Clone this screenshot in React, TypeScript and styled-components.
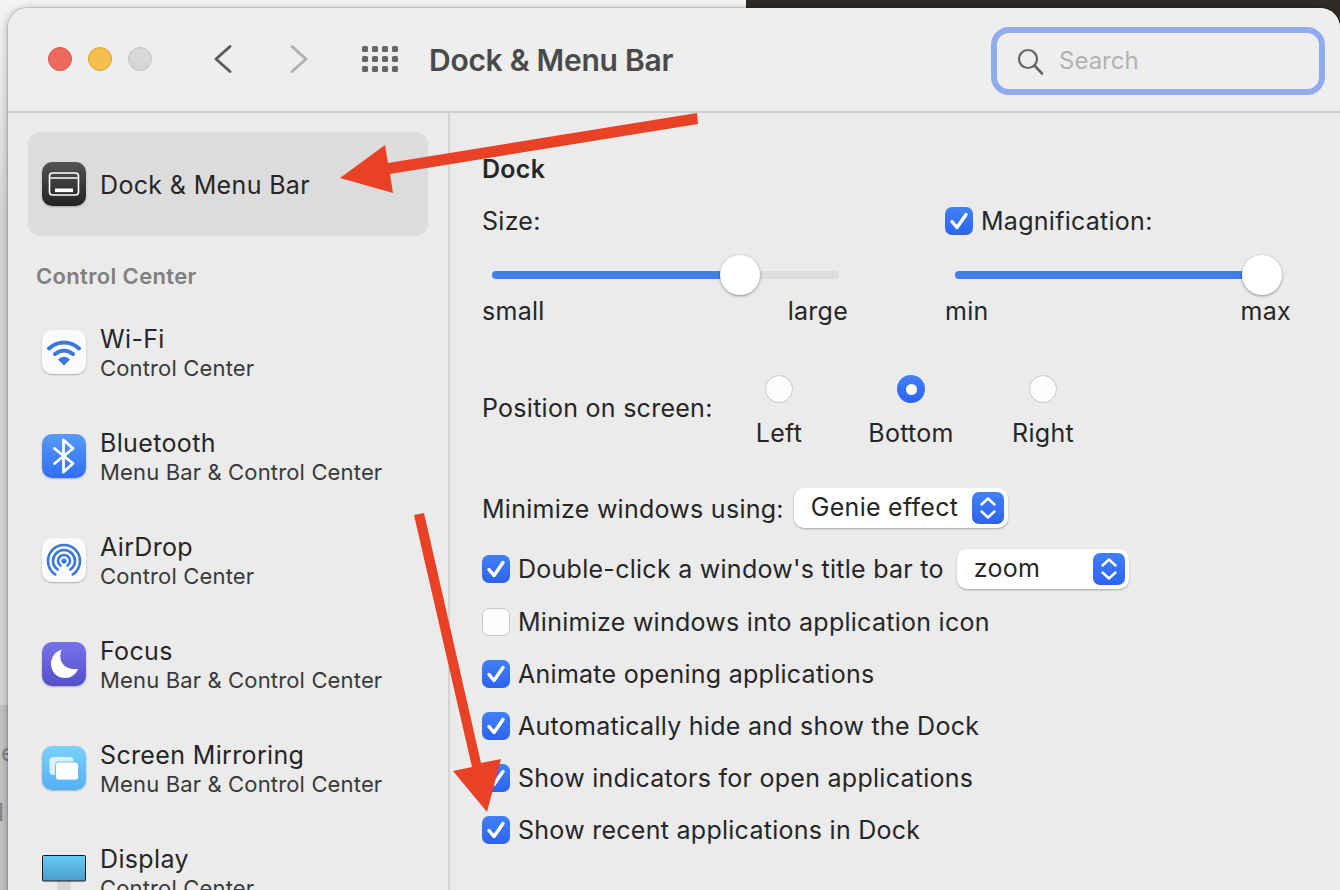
import React from 'react';
import styled, { createGlobalStyle } from 'styled-components';

const GlobalStyle = createGlobalStyle`
  html, body { margin: 0; padding: 0; }
  body {
    font-family: Inter, "Liberation Sans", sans-serif;
    color: #262626;
    -webkit-font-smoothing: antialiased;
  }
`;

const settings = [
  { label: 'Minimize windows into application icon', on: false },
  { label: 'Animate opening applications', on: true },
  { label: 'Automatically hide and show the Dock', on: true },
  { label: 'Show indicators for open applications', on: true },
  { label: 'Show recent applications in Dock', on: true },
];

const WifiIcon = () => (
  <svg width="44" height="44" viewBox="0 0 44 44">
    <g fill="none" stroke="#3a78dc" strokeWidth="4" strokeLinecap="round">
      <path d="M7 18.5C16 10.5 28 10.5 37 18.5" />
      <path d="M13 24C18.5 19.5 25.5 19.5 31 24" />
    </g>
    <path d="M17 29.5C20 27 24 27 27 29.5L22 34.5Z" fill="#3a78dc" stroke="#3a78dc" strokeWidth="1.5" strokeLinejoin="round" />
  </svg>
);

const BluetoothIcon = () => (
  <svg width="44" height="44" viewBox="0 0 44 44">
    <path d="M12.5 14.500L31 29.500L21.500 38V6L31 14.500L12.500 29.500" fill="none" stroke="#fff" strokeWidth="2.800" strokeLinecap="round" strokeLinejoin="round" />
  </svg>
);

const AirDropIcon = () => (
  <svg width="44" height="44" viewBox="0 0 44 44">
    <g fill="none" stroke="#3a78dc" strokeWidth="2.6" strokeLinecap="round">
      <path d="M13.2 36.5C8.6 33.4 6 28.5 6 23A16 16 0 0 1 38 23C38 28.5 35.4 33.4 30.8 36.5" />
      <path d="M15.6 31.5C12.8 29.4 11 26.4 11 23A11 11 0 0 1 33 23C33 26.4 31.2 29.4 28.4 31.5" />
      <path d="M18.5 27.5C17 26.4 16 24.800 16 23A6 6 0 0 1 28 23C28 24.800 27 26.400 25.500 27.500" />
    </g>
    <circle cx="22" cy="23" r="2.600" fill="#3a78dc" />
  </svg>
);

const MoonIcon = () => (
  <svg width="44" height="44" viewBox="0 0 44 44">
    <path d="M19.500 7.500C15.500 19 22 28.500 36 27C33.500 33 28.500 36 23 36C15 36 9 30 9 22C9 15 13.500 9.500 19.500 7.500Z" fill="#fff" />
  </svg>
);

const MirrorIcon = () => (
  <svg width="44" height="44" viewBox="0 0 44 44">
    <rect x="7.500" y="11" width="24" height="18" rx="3.500" fill="#fff" fillOpacity="0.75" />
    <rect x="13.500" y="16" width="23" height="18" rx="3" fill="#fff" stroke="#6cc0f5" strokeWidth="1" />
  </svg>
);

const DisplayIcon = () => (
  <svg width="44" height="44" viewBox="0 0 44 44">
    <defs>
      <linearGradient id="screen" x1="0" y1="0" x2="0" y2="1">
        <stop offset="0" stopColor="#69cbf7" />
        <stop offset="1" stopColor="#479dcb" />
      </linearGradient>
    </defs>
    <rect x="15.500" y="31" width="13" height="13" fill="#d6d6d6" />
    <rect x="0.500" y="5.500" width="43" height="25.500" rx="1" fill="url(#screen)" stroke="#1c1c1c" />
  </svg>
);

const DockGlyph = () => (
  <svg width="44" height="44" viewBox="0 0 44 44">
    <rect x="7.500" y="11" width="29" height="22" rx="3" fill="none" stroke="#fff" strokeWidth="1.600" />
    <path d="M7.500 16H36.500" stroke="#fff" strokeWidth="1.600" />
    <rect x="13" y="26.500" width="18" height="3.600" fill="#fff" />
  </svg>
);

const CheckGlyph = () => (
  <svg width="28" height="28" viewBox="0 0 28 28">
    <path d="M7 14.500L12 20.500L21 7.500" fill="none" stroke="#fff" strokeWidth="3.400" strokeLinecap="round" strokeLinejoin="round" />
  </svg>
);

const StepperGlyph = () => (
  <svg width="32" height="32" viewBox="0 0 32 32">
    <g fill="none" stroke="#fff" strokeWidth="2.400" strokeLinecap="round" strokeLinejoin="round">
      <path d="M9.500 12.500L16 6.500L22.500 12.500" />
      <path d="M9.500 19.500L16 25.500L22.500 19.500" />
    </g>
  </svg>
);

const Check = ({ on = true }: { on?: boolean }) => (
  <CheckBox $on={on}>{on && <CheckGlyph />}</CheckBox>
);

const App = () => {
  return (
    <Page>
      <GlobalStyle />
      <BehindText $top={738} $right={1325}>ne</BehindText>
      <BehindText $top={798} $right={1336}>d</BehindText>
      <Window>
        <TitleBar>
          <Lights>
            <Light $bg="#ec6a5e" $edge="#d3564b" />
            <Light $bg="#f5bf4f" $edge="#d9a437" />
            <Light $bg="#d8d8d8" $edge="#c2c2c2" />
          </Lights>
          <NavIcon $left={61}>
            <svg width="20" height="30" viewBox="0 0 20 30">
              <path d="M17 2.500L3 15L17 27.500" fill="none" stroke="#5c5c5c" strokeWidth="3" strokeLinecap="round" strokeLinejoin="round" />
            </svg>
          </NavIcon>
          <NavIcon $left={56}>
            <svg width="20" height="30" viewBox="0 0 20 30">
              <path d="M3 2.500L17 15L3 27.500" fill="none" stroke="#b0b0b0" strokeWidth="3" strokeLinecap="round" strokeLinejoin="round" />
            </svg>
          </NavIcon>
          <GridIcon>
            {Array.from({ length: 12 }).map((_, i) => (
              <GridDot key={i} />
            ))}
          </GridIcon>
          <Title>Dock &amp; Menu Bar</Title>
          <SearchBox>
            <svg width="28" height="28" viewBox="0 0 28 28">
              <circle cx="12" cy="12" r="9" fill="none" stroke="#666" strokeWidth="2.200" />
              <path d="M18.500 18.500L26 26.500" fill="none" stroke="#666" strokeWidth="2.600" strokeLinecap="round" />
            </svg>
            <SearchText>Search</SearchText>
          </SearchBox>
        </TitleBar>
        <Body>
          <Sidebar>
            <SelectedRow>
              <IconTile $bg="linear-gradient(#545454, #222222)">
                <DockGlyph />
              </IconTile>
              <SelectedText>
                <RowName>Dock &amp; Menu Bar</RowName>
              </SelectedText>
            </SelectedRow>
            <SectionHeader>Control Center</SectionHeader>
            <SideRow>
              <IconTile $bg="#fbfbfb"><WifiIcon /></IconTile>
              <TextBlock>
                <RowName>Wi-Fi</RowName>
                <RowSub>Control Center</RowSub>
              </TextBlock>
            </SideRow>
            <SideRow>
              <IconTile $bg="linear-gradient(#589af9, #2f6ff0)"><BluetoothIcon /></IconTile>
              <TextBlock>
                <RowName>Bluetooth</RowName>
                <RowSub>Menu Bar &amp; Control Center</RowSub>
              </TextBlock>
            </SideRow>
            <SideRow>
              <IconTile $bg="#fbfbfb"><AirDropIcon /></IconTile>
              <TextBlock>
                <RowName>AirDrop</RowName>
                <RowSub>Control Center</RowSub>
              </TextBlock>
            </SideRow>
            <SideRow>
              <IconTile $bg="linear-gradient(#7873ec, #5450c9)"><MoonIcon /></IconTile>
              <TextBlock>
                <RowName>Focus</RowName>
                <RowSub>Menu Bar &amp; Control Center</RowSub>
              </TextBlock>
            </SideRow>
            <SideRow>
              <IconTile $bg="linear-gradient(#79d2fa, #55aef3)"><MirrorIcon /></IconTile>
              <TextBlock>
                <RowName>Screen Mirroring</RowName>
                <RowSub>Menu Bar &amp; Control Center</RowSub>
              </TextBlock>
            </SideRow>
            <SideRow>
              <PlainIcon><DisplayIcon /></PlainIcon>
              <TextBlock>
                <RowName>Display</RowName>
                <RowSub>Control Center</RowSub>
              </TextBlock>
            </SideRow>
          </Sidebar>
          <Pane>
            <Heading>Dock</Heading>
            <SliderGrid>
              <SliderCol $width={366}>
                <LabelLine>Size:</LabelLine>
                <Track $inset={10} $right={9} $pct={71.500}>
                  <Thumb $pct={71.500} />
                </Track>
                <Ends>
                  <span>small</span>
                  <span>large</span>
                </Ends>
              </SliderCol>
              <SliderCol $width={346}>
                <LabelLine>
                  <Check />
                  Magnification:
                </LabelLine>
                <Track $inset={10} $right={29} $pct={100}>
                  <Thumb $pct={100} />
                </Track>
                <Ends>
                  <span>min</span>
                  <span>max</span>
                </Ends>
              </SliderCol>
            </SliderGrid>
            <PositionRow>
              <PositionLabel>Position on screen:</PositionLabel>
              <RadioCol><Radio /><RadioText>Left</RadioText></RadioCol>
              <RadioCol><Radio $on /><RadioText>Bottom</RadioText></RadioCol>
              <RadioCol><Radio /><RadioText>Right</RadioText></RadioCol>
            </PositionRow>
            <MinimizeRow>
              <MinimizeCaption>Minimize windows using:</MinimizeCaption>
              <Select $width={214}>
                <SelectLabel>Genie effect</SelectLabel>
                <Stepper><StepperGlyph /></Stepper>
              </Select>
            </MinimizeRow>
            <CheckRow $first>
              <Check />
              Double-click a window's title bar to
              <ZoomSelect $width={172}>
                <SelectLabel>zoom</SelectLabel>
                <Stepper><StepperGlyph /></Stepper>
              </ZoomSelect>
            </CheckRow>
            {settings.map((s) => (
              <CheckRow key={s.label}>
                <Check on={s.on} />
                {s.label}
              </CheckRow>
            ))}
          </Pane>
        </Body>
      </Window>
      <ArrowLayer viewBox="0 0 1340 890">
        <polygon points="697,113 388,163 385,145 340,178 393,193 390,174 698,124" fill="#e94125" />
        <polygon points="414,515 424,513 481,763 501,759 487,812 453,771 472,767" fill="#e94125" />
      </ArrowLayer>
    </Page>
  );
};

export default App;

const Page = styled.div`
  position: relative;
  width: 1340px;
  height: 890px;
  overflow: hidden;
  padding: 8px 0 0 8px;
  box-sizing: border-box;
  background:
    linear-gradient(#c2c2c2, #c2c2c2) 0 705px / 8px 185px no-repeat,
    linear-gradient(#f4f4f4, #d6d6d6) 0 0 / 8px 220px no-repeat,
    linear-gradient(#d6d6d6, #d6d6d6) 0 220px / 8px 485px no-repeat,
    linear-gradient(90deg, #f4f4f4 746px, #2f2b27 746px);
`;

const BehindText = styled.div<{ $top: number; $right: number }>`
  position: absolute;
  right: ${(p) => p.$right}px;
  top: ${(p) => p.$top}px;
  font-size: 24px;
  line-height: 30px;
  color: #858585;
  white-space: nowrap;
`;

const Window = styled.div`
  position: relative;
  width: 1332px;
  height: 900px;
  background: #ebebeb;
  border-radius: 20px 20px 0 0;
  box-shadow: 0 0 0 1px rgba(0, 0, 0, 0.1), -1px 0 7px rgba(0, 0, 0, 0.26);
  overflow: hidden;
`;

const TitleBar = styled.div`
  height: 105px;
  box-sizing: border-box;
  display: flex;
  align-items: center;
  padding: 0 15px 0 40px;
  background: #eeeeee;
  border-bottom: 2px solid #cfcfcf;
`;

const Lights = styled.div`
  display: flex;
  gap: 16px;
  margin-top: -1px;
`;

const Light = styled.span<{ $bg: string; $edge: string }>`
  width: 24px;
  height: 24px;
  box-sizing: border-box;
  border-radius: 50%;
  background: ${(p) => p.$bg};
  border: 1px solid ${(p) => p.$edge};
`;

const NavIcon = styled.span<{ $left: number }>`
  display: flex;
  margin-left: ${(p) => p.$left}px;
  margin-top: -1px;
`;

const GridIcon = styled.div`
  display: grid;
  grid-template-columns: repeat(4, 6px);
  grid-auto-rows: 6px;
  gap: 4px;
  margin-left: 53px;
  margin-top: -1px;
`;

const GridDot = styled.span`
  border-radius: 1.5px;
  background: #666666;
`;

const Title = styled.div`
  margin-left: 31px;
  font-size: 30px;
  font-weight: 600;
  letter-spacing: -0.27px;
  color: #4a4a4a;
`;

const SearchBox = styled.div`
  margin-left: auto;
  margin-top: 2px;
  width: 334px;
  height: 68px;
  box-sizing: border-box;
  display: flex;
  align-items: center;
  gap: 15px;
  padding: 0 0 0 19px;
  border: 6px solid #90abee;
  border-radius: 18px;
  flex-shrink: 0;
`;

const SearchText = styled.span`
  font-size: 24px;
  color: #b2b2b2;
`;

const Body = styled.div`
  display: flex;
`;

const Sidebar = styled.div`
  width: 442px;
  box-sizing: border-box;
  padding: 19px 20px 0 20px;
  border-right: 2px solid #d3d3d3;
  flex-shrink: 0;
`;

const SelectedRow = styled.div`
  height: 104px;
  display: flex;
  align-items: center;
  gap: 14px;
  padding-left: 14px;
  background: #dcdcdc;
  border-radius: 12px;
`;

const SelectedText = styled.div`
  padding-top: 2px;
`;

const IconTile = styled.div<{ $bg: string }>`
  width: 44px;
  height: 44px;
  border-radius: 10px;
  background: ${(p) => p.$bg};
  box-shadow: 0 1px 2px rgba(0, 0, 0, 0.25);
  flex-shrink: 0;
`;

const PlainIcon = styled.div`
  width: 44px;
  height: 44px;
  flex-shrink: 0;
`;

const TextBlock = styled.div`
  padding-top: 1px;
`;

const RowName = styled.div`
  font-size: 25px;
  line-height: 30px;
  letter-spacing: 0.35px;
  color: #262626;
`;

const RowSub = styled.div`
  font-size: 22px;
  line-height: 28px;
  letter-spacing: 0.15px;
  color: #3a3a3a;
`;

const SectionHeader = styled.div`
  margin: 26px 0 10px 8px;
  font-size: 22px;
  line-height: 28px;
  letter-spacing: 0.35px;
  font-weight: 600;
  color: #7f7f7f;
`;

const SideRow = styled.div`
  height: 104px;
  display: flex;
  align-items: center;
  gap: 14px;
  padding-left: 14px;
`;

const Pane = styled.div`
  flex: 1;
  padding: 40px 0 0 32px;
  font-size: 25px;
  letter-spacing: 0.27px;
  color: #262626;
`;

const Heading = styled.div`
  font-size: 25px;
  line-height: 32px;
  font-weight: 600;
`;

const SliderGrid = styled.div`
  display: flex;
  gap: 97px;
  margin-top: 18px;
`;

const SliderCol = styled.div<{ $width: number }>`
  width: ${(p) => p.$width}px;
`;

const LabelLine = styled.div`
  height: 36px;
  display: flex;
  align-items: center;
  gap: 8px;
`;

const Track = styled.div<{ $inset: number; $right: number; $pct: number }>`
  position: relative;
  height: 8px;
  margin: 32px ${(p) => p.$right}px 16px ${(p) => p.$inset}px;
  border-radius: 4px;
  background: linear-gradient(
    90deg,
    #3f7df0 ${(p) => p.$pct}%,
    #dcdcdc ${(p) => p.$pct}%
  );
`;

const Thumb = styled.span<{ $pct: number }>`
  position: absolute;
  top: -16px;
  left: ${(p) => p.$pct}%;
  width: 40px;
  height: 40px;
  margin-left: -20px;
  border-radius: 50%;
  background: #ffffff;
  box-shadow: 0 1px 3px rgba(0, 0, 0, 0.4);
`;

const Ends = styled.div`
  height: 32px;
  display: flex;
  justify-content: space-between;
  align-items: center;
`;

const PositionRow = styled.div`
  display: grid;
  grid-template-columns: 231px repeat(3, 132px);
  margin-top: 48px;
`;

const PositionLabel = styled.div`
  height: 32px;
  margin-top: 17px;
  line-height: 32px;
`;

const RadioCol = styled.div`
  display: flex;
  flex-direction: column;
  align-items: center;
  gap: 14px;
`;

const Radio = styled.span<{ $on?: boolean }>`
  width: 28px;
  height: 28px;
  box-sizing: border-box;
  border-radius: 50%;
  background: ${(p) => (p.$on ? 'linear-gradient(#4280f6, #2c63ef)' : '#fdfdfd')};
  border: ${(p) => (p.$on ? 'none' : '1px solid #c9c9c9')};
  display: flex;
  align-items: center;
  justify-content: center;
  &::after {
    content: '';
    display: ${(p) => (p.$on ? 'block' : 'none')};
    width: 11px;
    height: 11px;
    border-radius: 50%;
    background: #ffffff;
  }
`;

const RadioText = styled.span`
  line-height: 32px;
`;

const MinimizeRow = styled.div`
  display: flex;
  align-items: center;
  gap: 10px;
  height: 40px;
  margin-top: 39px;
`;

const MinimizeCaption = styled.span`
  padding-top: 2px;
`;

const CheckRow = styled.div<{ $first?: boolean }>`
  display: flex;
  align-items: center;
  gap: 8px;
  height: 52px;
  margin-top: ${(p) => (p.$first ? '15px' : '0')};
  margin-bottom: ${(p) => (p.$first ? '1px' : '0')};
`;

const CheckBox = styled.span<{ $on: boolean }>`
  width: 28px;
  height: 28px;
  box-sizing: border-box;
  border-radius: 7px;
  flex-shrink: 0;
  background: ${(p) => (p.$on ? 'linear-gradient(#4280f6, #2c63ef)' : '#fdfdfd')};
  border: ${(p) => (p.$on ? 'none' : '1px solid #c9c9c9')};
`;

const Select = styled.div<{ $width: number }>`
  width: ${(p) => p.$width}px;
  height: 40px;
  box-sizing: border-box;
  display: flex;
  align-items: center;
  justify-content: space-between;
  padding: 0 4px 0 17px;
  background: #ffffff;
  border-radius: 10px;
  box-shadow: 0 1px 2px rgba(0, 0, 0, 0.3);
`;

const SelectLabel = styled.span`
  margin-top: -2px;
`;

const ZoomSelect = styled(Select)`
  margin-left: 5px;
`;

const Stepper = styled.span`
  display: flex;
  width: 32px;
  height: 32px;
  border-radius: 7px;
  background: linear-gradient(#4280f6, #2c63ef);
`;

const ArrowLayer = styled.svg`
  position: absolute;
  left: 0;
  top: 0;
  width: 1340px;
  height: 890px;
  pointer-events: none;
`;
